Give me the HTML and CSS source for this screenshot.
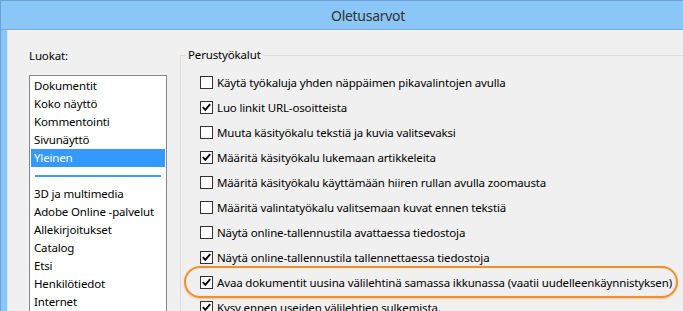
FILE: index.html
```html
<!DOCTYPE html>
<html lang="fi">
<head>
<meta charset="utf-8">
<title>Oletusarvot</title>
<link rel="stylesheet" href="styles.css">
</head>
<body>
<div class="window">
  <div class="titlebar"><span class="title">Oletusarvot</span></div>
  <div class="client">
    <div class="categories">
      <div class="cat-label">Luokat:</div>
      <ul class="listbox">
        <li>Dokumentit</li>
        <li>Koko näyttö</li>
        <li>Kommentointi</li>
        <li>Sivunäyttö</li>
        <li class="selected">Yleinen</li>
        <li class="separator"></li>
        <li>3D ja multimedia</li>
        <li>Adobe Online -palvelut</li>
        <li>Allekirjoitukset</li>
        <li>Catalog</li>
        <li>Etsi</li>
        <li>Henkilötiedot</li>
        <li>Internet</li>
      </ul>
    </div>
    <fieldset class="group">
      <legend>Perustyökalut</legend>
      <div class="options">
        <label class="row"><span class="cb"></span><span>Käytä työkaluja yhden näppäimen pikavalintojen avulla</span></label>
        <label class="row"><span class="cb checked"><svg viewBox="0 0 11 11" width="11" height="11"><path d="M1.8 5.2 L4.3 7.8 L9.2 2.2" /></svg></span><span>Luo linkit URL-osoitteista</span></label>
        <label class="row"><span class="cb"></span><span>Muuta käsityökalu tekstiä ja kuvia valitsevaksi</span></label>
        <label class="row"><span class="cb checked"><svg viewBox="0 0 11 11" width="11" height="11"><path d="M1.8 5.2 L4.3 7.8 L9.2 2.2" /></svg></span><span>Määritä käsityökalu lukemaan artikkeleita</span></label>
        <label class="row"><span class="cb"></span><span>Määritä käsityökalu käyttämään hiiren rullan avulla zoomausta</span></label>
        <label class="row"><span class="cb"></span><span>Määritä valintatyökalu valitsemaan kuvat ennen tekstiä</span></label>
        <label class="row"><span class="cb"></span><span>Näytä online-tallennustila avattaessa tiedostoja</span></label>
        <label class="row"><span class="cb checked"><svg viewBox="0 0 11 11" width="11" height="11"><path d="M1.8 5.2 L4.3 7.8 L9.2 2.2" /></svg></span><span>Näytä online-tallennustila tallennettaessa tiedostoja</span></label>
        <label class="row highlight"><span class="cb checked"><svg viewBox="0 0 11 11" width="11" height="11"><path d="M1.8 5.2 L4.3 7.8 L9.2 2.2" /></svg></span><span>Avaa dokumentit uusina välilehtinä samassa ikkunassa (vaatii uudelleenkäynnistyksen)</span></label>
        <label class="row"><span class="cb checked"><svg viewBox="0 0 11 11" width="11" height="11"><path d="M1.8 5.2 L4.3 7.8 L9.2 2.2" /></svg></span><span>Kysy ennen useiden välilehtien sulkemista.</span></label>
      </div>
    </fieldset>
  </div>
</div>
</body>
</html>
```
FILE: styles.css
```css
html, body {
  margin: 0;
  padding: 0;
  width: 683px;
  height: 311px;
  overflow: hidden;
}
body {
  font-family: "Noto Sans", "Open Sans", sans-serif;
  font-size: 11.5px;
  letter-spacing: -0.15px;
  color: #000;
}
.window {
  width: 683px;
  height: 311px;
  background: #8bc6f8;
  border-top: 1px solid #6e9fd6;
  border-left: 1px solid #6e9fd6;
  box-sizing: border-box;
  display: flex;
  flex-direction: column;
}
.titlebar {
  height: 28px;
  flex: none;
  display: flex;
  align-items: center;
  justify-content: center;
  padding-left: 52px;
  border-bottom: 1px solid #79a9dc;
}
.title {
  font-size: 14px;
  color: #333;
  letter-spacing: -0.3px;
}
.client {
  flex: 1;
  margin-left: 6px;
  background: #f0f0f0;
  border-top: 1px solid #f7f7f7;
  border-left: 1px solid #dde3ea;
  display: flex;
  align-items: flex-start;
  overflow: hidden;
}
.categories {
  padding: 17px 0 0 21px;
  flex: none;
}
.cat-label {
  line-height: 16px;
  height: 16px;
  margin-bottom: 11px;
}
.listbox {
  list-style: none;
  margin: 0;
  padding: 1px;
  width: 134px;
  border: 1px solid #828790;
  background: #fff;
}
.listbox li {
  height: 18px;
  line-height: 18px;
  padding-left: 3px;
  white-space: nowrap;
}
.listbox li.selected {
  background: #3399ff;
  color: #fff;
}
.listbox li.separator {
  display: flex;
  align-items: center;
  padding: 0 4px;
}
.listbox li.separator::after {
  content: "";
  display: block;
  flex: 1;
  height: 2px;
  background: #3c9cf0;
}
.group {
  flex: 1;
  margin: 16px 0 0 13px;
  padding: 0 0 0 5px;
  border: 1px solid #dcdcdc;
  border-right: none;
  border-bottom: none;
  min-width: 0;
  height: 400px;
}
.group legend {
  padding: 0 2px;
  line-height: 16px;
}
.options {
  padding: 7px 0 0 14px;
  display: flex;
  flex-direction: column;
}
.row {
  height: 25px;
  display: flex;
  align-items: center;
  gap: 4px;
  white-space: nowrap;
  position: relative;
}
.cb {
  width: 11px;
  height: 11px;
  border: 1px solid #333;
  background: #fff;
  flex: none;
  display: flex;
}
.cb svg path {
  fill: none;
  stroke: #000;
  stroke-width: 1.9;
}
.highlight::before {
  content: "";
  position: absolute;
  left: -16px;
  right: 5px;
  top: -4px;
  bottom: -3px;
  border: 2px solid #f0902a;
  border-radius: 16px;
  box-shadow: 0 1px 2px rgba(240, 144, 42, 0.45), inset 0 0 1px rgba(240, 144, 42, 0.4);
  pointer-events: none;
}
```
